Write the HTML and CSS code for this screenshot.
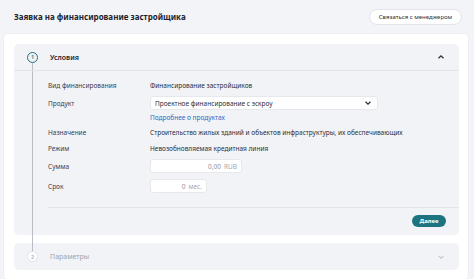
FILE: index.html
```html
<!DOCTYPE html>
<html lang="ru">
<head>
    <meta charset="UTF-8">
    <meta name="viewport" content="width=device-width, initial-scale=1.0">
    <title>Заявка на финансирование застройщика</title>
    <link rel="stylesheet" href="styles.css">
</head>
<body>
    <div class="page">
        <div class="header">
            <h1 class="title">Заявка на финансирование застройщика</h1>
            <button class="btn-contact">Связаться с менеджером</button>
        </div>
        <div class="card">
            <!-- линия шагов -->
            <div class="timeline"></div>
            <div class="step step-open">
                <div class="step-head">
                    <span class="step-num">1</span>
                    <span class="step-title">Условия</span>
                    <svg class="chevron" width="8" height="6" viewBox="0 0 8 6"><path d="M1.5 4.2 L4 1.8 L6.5 4.2" fill="none" stroke="#2b3140" stroke-width="1.3"/></svg>
                </div>
                <div class="step-body">
                    <div class="row">
                        <div class="label">Вид финансирования</div>
                        <div class="value">Финансирование застройщиков</div>
                    </div>
                    <div class="row row-select">
                        <div class="label">Продукт</div>
                        <div class="select">
                            <span>Проектное финансирование с эскроу</span>
                            <svg width="8" height="6" viewBox="0 0 8 6"><path d="M1.5 1.8 L4 4.2 L6.5 1.8" fill="none" stroke="#2b3140" stroke-width="1.3"/></svg>
                        </div>
                    </div>
                    <a class="link" href="#">Подробнее о продуктах</a>
                    <div class="row row-purpose">
                        <div class="label">Назначение</div>
                        <div class="value">Строительство жилых зданий и объектов инфраструктуры, их обеспечивающих</div>
                    </div>
                    <div class="row row-mode">
                        <div class="label">Режим</div>
                        <div class="value">Невозобновляемая кредитная линия</div>
                    </div>
                    <div class="row row-input">
                        <div class="label">Сумма</div>
                        <div class="input input-sum">0,00 <span class="unit">RUB</span></div>
                    </div>
                    <div class="row row-input">
                        <div class="label">Срок</div>
                        <div class="input input-term">0 <span class="unit">мес.</span></div>
                    </div>
                    <div class="step-foot">
                        <button class="btn-next">Далее</button>
                    </div>
                </div>
            </div>
            <div class="step step-closed">
                <div class="step-head">
                    <span class="step-num">2</span>
                    <span class="step-title">Параметры</span>
                    <svg class="chevron" width="8" height="6" viewBox="0 0 8 6"><path d="M1.5 1.8 L4 4.2 L6.5 1.8" fill="none" stroke="#c3c7ce" stroke-width="1.1"/></svg>
                </div>
            </div>
        </div>
    </div>
</body>
</html>
```

FILE: styles.css
```css
* {margin: 0; padding: 0; box-sizing: border-box;}
body {
    background-color: #f3f4f7;
    font-family: "Noto Sans", "Open Sans", sans-serif;
    color: #2b3140;
    font-size: 6.5px;
}
.page {
    width: 474px;
    height: 279px;
    padding: 0 5px 2px 3px;
}
.header {
    height: 33px;
    display: flex;
    align-items: center;
    justify-content: space-between;
    padding: 0 7px 0 11px;
}
.title {
    font-size: 8px;
    font-weight: 700;
    color: #1d2330;
    padding-bottom: 1px;
}
.btn-contact {
    font-family: inherit;
    font-size: 6px;
    color: #2b3140;
    background-color: #fff;
    border: 1px solid #e3e5ea;
    border-radius: 8px;
    width: 93px;
    height: 16px;
    margin-top: 1px;
}
.card {
    position: relative;
    background-color: #fff;
    border: 1px solid #eceef2;
    border-radius: 4px;
    padding: 10px 9px 9px 10px;
    display: flex;
    flex-direction: column;
    gap: 8px;
}
.timeline {
    position: absolute;
    left: 28px;
    top: 28px;
    width: 1px;
    height: 190px;
    background-color: #b9bdc5;
}
.step {
    background-color: #f2f3f6;
    border-radius: 5px;
}
.step-head {
    position: relative;
    height: 27px;
    display: flex;
    align-items: center;
    padding: 0 14px 0 13px;
}
.step-open .step-head {
    border-bottom: 1px solid #e2e4e9;
}
.step-num {
    position: relative;
    z-index: 1;
    width: 11px;
    height: 11px;
    border-radius: 50%;
    display: flex;
    align-items: center;
    justify-content: center;
    font-size: 5.5px;
    font-weight: 600;
    margin-right: 12px;
}
.step-open .step-num {
    border: 1px solid #1c7480;
    color: #1c7480;
    background-color: #f2f3f6;
}
.step-closed .step-num {
    border: 1px solid #e3e5ea;
    color: #a8adb6;
    background-color: #fff;
}
.step-title {
    flex: 1;
    font-size: 7px;
    font-weight: 600;
    color: #1d2330;
}
.step-closed .step-title {
    font-weight: 400;
    color: #9ea3ad;
}
.step-body {
    padding: 9px 13px 8px 34px;
    display: flex;
    flex-direction: column;
}
.row {
    display: flex;
    align-items: center;
    min-height: 10px;
}
.label {
    width: 102px;
    flex-shrink: 0;
    color: #3a4150;
}
.value {
    color: #2b3140;
}
.row-select {
    margin-top: 6px;
}
.select {
    width: 228px;
    height: 14px;
    background-color: #fff;
    border: 1px solid #e6e8ec;
    border-radius: 3px;
    display: flex;
    align-items: center;
    justify-content: space-between;
    padding: 0 5px 0 4px;
}
.link {
    margin: 3px 0 0 102px;
    line-height: 10px;
    color: #2a6cc4;
    text-decoration: none;
}
.row-purpose {
    margin-top: 4px;
}
.row-mode {
    margin-top: 6px;
}
.row-input {
    margin-top: 6px;
}
.input {
    height: 14px;
    background-color: #fff;
    border: 1px solid #e6e8ec;
    border-radius: 3px;
    display: flex;
    align-items: center;
    justify-content: flex-end;
    gap: 3px;
    padding: 0 4px;
    color: #8f95a0;
}
.unit {
    color: #a3a8b1;
}
.input-sum {
    width: 92px;
}
.input-term {
    width: 57px;
}
.step-foot {
    margin-top: 14px;
    border-top: 1px solid #e2e4e9;
    padding-top: 7px;
    display: flex;
    justify-content: flex-end;
    margin-right: -13px;
    padding-right: 13px;
}
.btn-next {
    font-family: inherit;
    font-size: 6px;
    font-weight: 700;
    color: #fff;
    background-color: #1c7480;
    border: none;
    border-radius: 7px;
    width: 34px;
    height: 12px;
}
```
